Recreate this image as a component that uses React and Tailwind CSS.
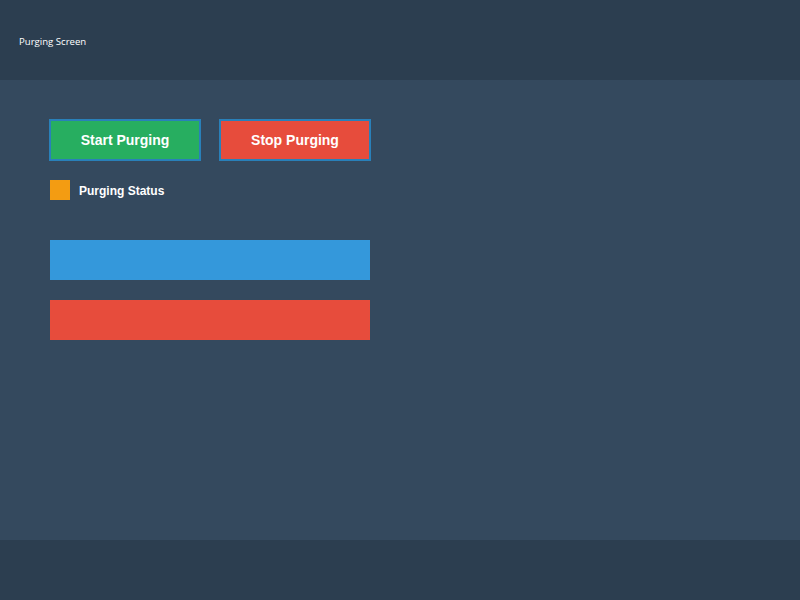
export default function App() {
  return (
    <div className="flex h-[600px] w-[800px] flex-col bg-[#34495e]" style={{ fontFamily: '"Liberation Sans", Arial, sans-serif' }}>
      {/* Header */}
      <div className="flex h-[80px] items-center bg-[#2c3e50] px-[19px] pt-[5px]">
        <span className="text-[9.6px] text-white" style={{ fontFamily: '"Open Sans", sans-serif' }}>
          Purging Screen
        </span>
      </div>

      {/* Main */}
      <div className="flex h-[460px] flex-col pl-[49px] pt-[39px]">
        <div className="flex gap-[18px]">
          <button className="flex h-[42px] w-[152px] items-center justify-center border-2 border-[#2980b9] bg-[#27ae60] text-[14px] font-bold text-white">
            Start Purging
          </button>
          <button className="flex h-[42px] w-[152px] items-center justify-center border-2 border-[#2980b9] bg-[#e74c3c] text-[14px] font-bold text-white">
            Stop Purging
          </button>
        </div>

        <div className="ml-px mt-[19px] flex items-center gap-[9px]">
          <div className="h-[20px] w-[20px] bg-[#f39c12]" />
          <span className="pt-[2px] text-[12px] font-bold text-white">Purging Status</span>
        </div>

        <div className="ml-px mt-[40px] flex flex-col gap-[20px]">
          <div className="h-[40px] w-[320px] bg-[#3498db]" />
          <div className="h-[40px] w-[320px] bg-[#e74c3c]" />
        </div>
      </div>

      {/* Footer */}
      <div className="h-[60px] bg-[#2c3e50]" />
    </div>
  );
}
